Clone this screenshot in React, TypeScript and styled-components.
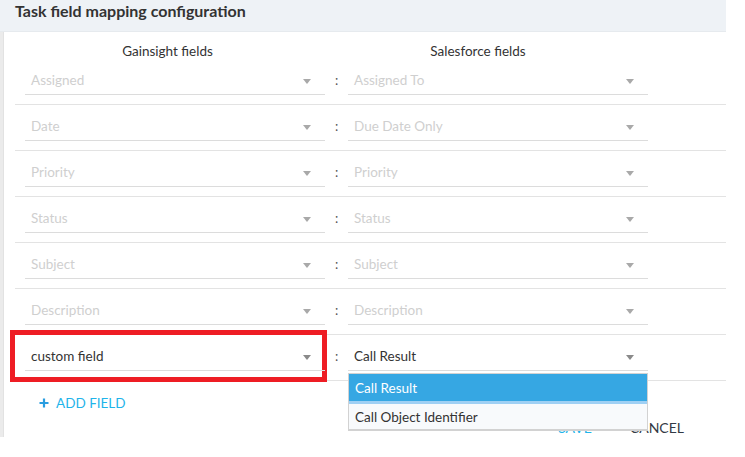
import styled, { createGlobalStyle } from 'styled-components'

const GlobalStyle = createGlobalStyle`
  html, body {
    margin: 0;
    padding: 0;
    background: #fff;
  }
  body {
    font-family: Lato, "Open Sans", sans-serif;
    color: #333;
  }
`

const Page = styled.div`
  width: 745px;
  height: 457px;
  display: flex;
  flex-direction: column;
`

const Header = styled.header`
  width: 726px;
  height: 32px;
  box-sizing: border-box;
  padding: 1px 0 0 15px;
  background: #eef2f6;
  border-bottom: 1px solid #e6eaee;
`

const Title = styled.h1`
  margin: 0;
  font-size: 16px;
  line-height: 19px;
  font-weight: 700;
  color: #333;
`

const Body = styled.div`
  display: flex;
  width: 726px;
  height: 405px;
`

const SideStrip = styled.div`
  width: 4px;
  background: #ebebeb;
  border-right: 1px solid #e2e2e2;
  box-sizing: border-box;
`

const Panel = styled.section`
  flex: 1;
  display: flex;
  flex-direction: column;
  padding-left: 11px;
  background: #fff;
`

const HeaderRow = styled.div`
  display: flex;
  height: 27px;
  box-sizing: border-box;
  padding-top: 11px;
`

const HeaderCell = styled.div<{ $width: number; $offset?: number }>`
  width: ${p => p.$width}px;
  margin-left: ${p => p.$offset ?? 0}px;
  text-align: center;
  font-size: 13.5px;
  line-height: 16px;
  color: #333;
`

const Row = styled.div`
  position: relative;
  display: flex;
  height: 46px;
  box-sizing: border-box;
  padding: 8px 0 0 10px;
  border-bottom: 1px solid #e3e3e3;
`

const Select = styled.div<{ $filled?: boolean }>`
  position: relative;
  width: 300px;
  height: 28px;
  box-sizing: border-box;
  display: flex;
  align-items: center;
  justify-content: space-between;
  padding: 0 14px 2px 6px;
  border-bottom: 1px solid #dcdcdc;
  font-size: 13.5px;
  color: ${p => (p.$filled ? '#333' : '#cfcfcf')};
`

const Arrow = styled.span<{ $filled?: boolean }>`
  width: 0;
  height: 0;
  margin-top: 3px;
  border-left: 4px solid transparent;
  border-right: 4px solid transparent;
  border-top: 5px solid ${p => (p.$filled ? '#8a8a8a' : '#a9a9a9')};
`

const Colon = styled.span`
  width: 23px;
  text-align: center;
  font-size: 13px;
  line-height: 26px;
  color: #555;
`

const Highlight = styled.div`
  position: absolute;
  left: -5px;
  top: -5px;
  width: 317px;
  height: 52px;
  box-sizing: border-box;
  border: 5px solid #ee1d24;
  pointer-events: none;
`

const Menu = styled.ul`
  position: absolute;
  left: 0;
  top: calc(100% + 3px);
  width: 300px;
  margin: 0;
  padding: 0;
  list-style: none;
  box-sizing: border-box;
  border: 1px solid #d2d2d2;
  border-bottom-width: 2px;
  background: #f8fafc;
  z-index: 2;
`

const MenuItem = styled.li<{ $active?: boolean }>`
  height: ${p => (p.$active ? 27 : 25)}px;
  display: flex;
  align-items: center;
  padding-left: 6px;
  font-size: 13.5px;
  color: ${p => (p.$active ? '#fff' : '#333')};
  background: ${p => (p.$active ? '#36a7e3' : '#f8fafc')};
  border-bottom: ${p => (p.$active ? '3px solid #9fd0f4' : 'none')};
`

const AddField = styled.button`
  align-self: flex-start;
  display: flex;
  align-items: center;
  gap: 7px;
  margin: 14px 0 0 24px;
  padding: 0;
  border: 0;
  background: none;
  font-family: inherit;
  font-size: 13.5px;
  line-height: 16px;
  color: #1fb4ea;
  cursor: pointer;
`

const PlusIcon = styled.svg`
  width: 10px;
  height: 10px;
  color: #2a9de0;
`

const Footer = styled.div`
  display: flex;
  justify-content: flex-end;
  gap: 38px;
  margin-top: 9px;
  padding-right: 42px;
`

const FooterButton = styled.button<{ $primary?: boolean }>`
  padding: 0;
  border: 0;
  background: none;
  font-family: inherit;
  font-size: 14px;
  line-height: 16px;
  color: ${p => (p.$primary ? '#1fb4ea' : '#333a45')};
  cursor: pointer;
`

const mappings = [
  ['Assigned', 'Assigned To'],
  ['Date', 'Due Date Only'],
  ['Priority', 'Priority'],
  ['Status', 'Status'],
  ['Subject', 'Subject'],
  ['Description', 'Description'],
]

export default function App() {
  return (
    <Page>
      <GlobalStyle />
      <Header>
        <Title>Task field mapping configuration</Title>
      </Header>
      <Body>
        <SideStrip />
        <Panel>
          <HeaderRow>
            <HeaderCell $width={305}>Gainsight fields</HeaderCell>
            <HeaderCell $width={284} $offset={16}>Salesforce fields</HeaderCell>
          </HeaderRow>
          {mappings.map(([gs, sf]) => (
            <Row key={gs}>
              <Select>
                {gs}
                <Arrow />
              </Select>
              <Colon>:</Colon>
              <Select>
                {sf}
                <Arrow />
              </Select>
            </Row>
          ))}
          <Row>
            <Highlight />
            <Select $filled>
              custom field
              <Arrow $filled />
            </Select>
            <Colon>:</Colon>
            <Select $filled>
              Call Result
              <Arrow $filled />
              <Menu>
                <MenuItem $active>Call Result</MenuItem>
                <MenuItem>Call Object Identifier</MenuItem>
              </Menu>
            </Select>
          </Row>
          <AddField>
            <PlusIcon viewBox="0 0 10 10">
              <path d="M5 0.5v9M0.5 5h9" stroke="currentColor" strokeWidth="2.2" fill="none" />
            </PlusIcon>
            ADD FIELD
          </AddField>
          <Footer>
            <FooterButton $primary>SAVE</FooterButton>
            <FooterButton>CANCEL</FooterButton>
          </Footer>
        </Panel>
      </Body>
    </Page>
  )
}
